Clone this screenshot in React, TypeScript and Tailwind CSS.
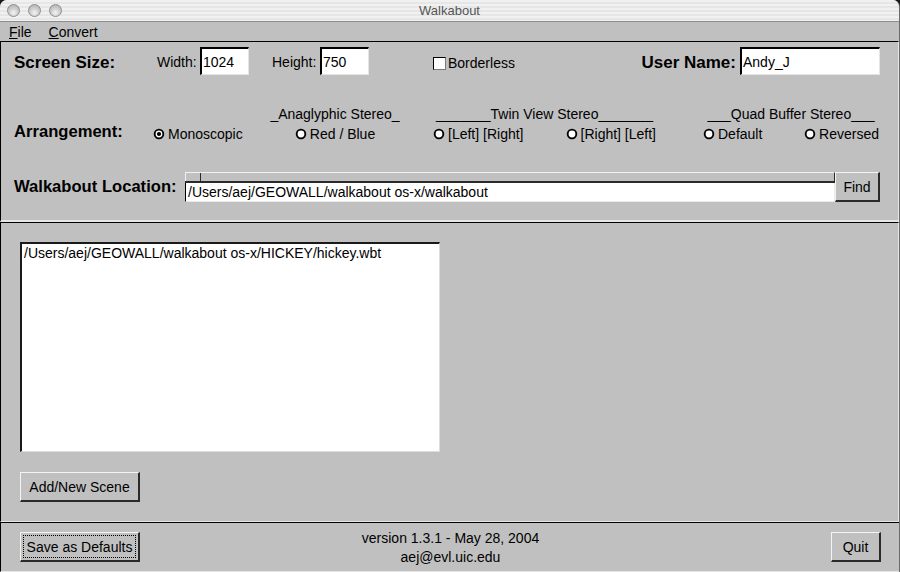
import React from "react"

function Radio({ checked = false, label }: { checked?: boolean; label: string }) {
  return (
    <div className="flex items-center gap-[3px] leading-[16px]">
      <svg width="12" height="12" viewBox="0 0 12 12" className="shrink-0">
        <circle cx="6" cy="6" r="5.6" fill="#9a9a9a" opacity="0.5" />
        <circle cx="6" cy="6" r="4.3" fill="#ffffff" stroke="#000000" strokeWidth="1.8" />
        {checked && <circle cx="6" cy="6" r="2.1" fill="#000000" />}
      </svg>
      <span>{label}</span>
    </div>
  )
}

function Button({ children, width, focused = false }: { children: React.ReactNode; width: string; focused?: boolean }) {
  return (
    <div
      className={`${width} h-[30px] bg-[#c0c0c0] border-t border-l border-t-[#f4f4f4] border-l-[#f4f4f4] border-b-2 border-r-2 border-b-[#2a2a2a] border-r-[#2a2a2a] flex items-center justify-center p-[2px]`}
    >
      <div
        className={`w-full h-full flex items-center justify-center pt-[1px] ${focused ? "border border-dotted border-black" : ""}`}
      >
        {children}
      </div>
    </div>
  )
}

function TextBox({ value, width }: { value: string; width: string }) {
  return (
    <div
      className={`${width} h-[28px] bg-white border-t-2 border-l-2 border-t-black border-l-black border-r border-b border-r-[#e4e4e4] border-b-[#e4e4e4] pl-[1px] pt-[1px] flex items-center leading-[16px]`}
    >
      {value}
    </div>
  )
}

export default function App() {
  return (
    <div className="w-[900px] h-[572px] bg-[#1a1a1a] overflow-hidden font-['Liberation_Sans',Arial,sans-serif] text-[14px] text-black">
      <div className="w-[900px] h-[572px] rounded-t-[7px] overflow-hidden flex flex-col bg-[#c0c0c0] border-r border-r-[#6a6a6a]">
        {/* title bar */}
        <div className="h-[22px] shrink-0 relative flex items-center justify-center border-b border-b-[#8c8c8c] bg-[repeating-linear-gradient(to_bottom,#f1f1f1_0px,#f1f1f1_2px,#e6e6e6_2px,#e6e6e6_4px)]">
          <div className="absolute left-[7px] top-[4px] flex gap-[8px]">
            {[0, 1, 2].map((i) => (
              <div
                key={i}
                className="w-[13px] h-[13px] rounded-full border border-[#8e8e8e] bg-[radial-gradient(circle_at_50%_70%,#f4f4f4_0%,#cfcfcf_45%,#a9a9a9_100%)]"
              />
            ))}
          </div>
          <span className="text-[13px] text-[#555555] leading-none">Walkabout</span>
        </div>

        {/* menu bar */}
        <div className="h-[19px] shrink-0 flex items-center pl-[9px] gap-[17px] leading-[16px]">
          <span>
            <span className="underline">F</span>ile
          </span>
          <span>
            <span className="underline">C</span>onvert
          </span>
        </div>

        {/* settings panel */}
        <div className="h-[181px] shrink-0 border-t border-l border-t-black border-l-black border-b-2 border-r border-b-[#e6e6e6] border-r-[#e6e6e6] pl-[13px] pr-[18px]">
          <div className="mt-[5px] h-[28px] flex items-center">
            <span className="w-[143px] font-bold text-[17px] pt-[3px]">Screen Size:</span>
            <span className="w-[43px] pt-[3px]">Width:</span>
            <TextBox value="1024" width="w-[49px]" />
            <span className="ml-[23px] w-[48px] pt-[3px]">Height:</span>
            <TextBox value="750" width="w-[49px]" />
            <div className="ml-[64px] flex items-center gap-[2px] pt-[4px]">
              <div className="w-[13px] h-[13px] bg-white border border-t-black border-l-black border-r-[#7a7a7a] border-b-[#7a7a7a]" />
              <span>Borderless</span>
            </div>
            <div className="ml-auto flex items-center gap-[4px]">
              <span className="font-bold text-[17px] pt-[3px]">User Name:</span>
              <TextBox value="Andy_J" width="w-[140px]" />
            </div>
          </div>

          <div className="mt-[31px] flex items-end">
            <span className="w-[139px] font-bold text-[16.6px] leading-[20px]">Arrangement:</span>
            <div className="w-[117px]">
              <Radio checked label="Monoscopic" />
            </div>
            <div className="w-[130px] flex flex-col items-center">
              <span className="leading-[16px] whitespace-nowrap">_Anaglyphic Stereo_</span>
              <div className="mt-[4px]">
                <Radio label="Red / Blue" />
              </div>
            </div>
            <div className="ml-[33px] w-[223px] flex flex-col">
              <span className="leading-[16px] whitespace-nowrap text-center">_______Twin View Stereo_______</span>
              <div className="mt-[4px] flex justify-between">
                <Radio label="[Left] [Right]" />
                <Radio label="[Right] [Left]" />
              </div>
            </div>
            <div className="ml-[47px] w-[176px] flex flex-col">
              <span className="leading-[16px] whitespace-nowrap text-center">___Quad Buffer Stereo___</span>
              <div className="mt-[4px] flex justify-between">
                <Radio label="Default" />
                <Radio label="Reversed" />
              </div>
            </div>
          </div>

          <div className="mt-[30px] h-[30px] flex items-center">
            <span className="w-[171px] font-bold text-[16.6px] pt-[1px] whitespace-nowrap">Walkabout Location:</span>
            <div className="w-[650px] h-[30px] flex flex-col">
              <div className="h-[9px] flex border-t border-l border-t-[#f2f2f2] border-l-[#f2f2f2] border-r border-r-[#2a2a2a]">
                <div className="w-[15px] border-r border-r-[#2a2a2a]" />
              </div>
              <div className="h-[2px] bg-[#2a2a2a]" />
              <div className="h-[19px] bg-white border-l border-l-black border-b border-b-[#e8e8e8] border-r border-r-[#e8e8e8] pl-[2px] leading-[18px] whitespace-nowrap overflow-hidden">
                /Users/aej/GEOWALL/walkabout os-x/walkabout
              </div>
            </div>
            <Button width="w-[45px]">Find</Button>
          </div>
        </div>

        {/* scenes panel */}
        <div className="h-[300px] shrink-0 border-t border-l border-t-black border-l-black border-b border-r border-b-[#e6e6e6] border-r-[#e6e6e6] pl-[19px] pt-[19px]">
          <div className="w-[420px] h-[210px] bg-white border-t-2 border-l-2 border-t-[#1a1a1a] border-l-[#1a1a1a] border-b border-r border-b-[#dcdcdc] border-r-[#dcdcdc] pl-[2px] pt-[1px] leading-[16px]">
            /Users/aej/GEOWALL/walkabout os-x/HICKEY/hickey.wbt
          </div>
          <div className="mt-[20px]">
            <Button width="w-[120px]">Add/New Scene</Button>
          </div>
        </div>

        {/* footer panel */}
        <div className="flex-1 border-t border-l border-t-black border-l-black border-b border-b-[#e6e6e6] pl-[19px] pr-[18px] grid grid-cols-[1fr_auto_1fr] items-center">
          <div className="justify-self-start">
            <Button width="w-[120px]" focused>
              Save as Defaults
            </Button>
          </div>
          <div className="flex flex-col items-center leading-[19px] pt-[2px]">
            <span>version 1.3.1 - May 28, 2004</span>
            <span>aej@evl.uic.edu</span>
          </div>
          <div className="justify-self-end">
            <Button width="w-[50px]">Quit</Button>
          </div>
        </div>
      </div>
    </div>
  )
}
